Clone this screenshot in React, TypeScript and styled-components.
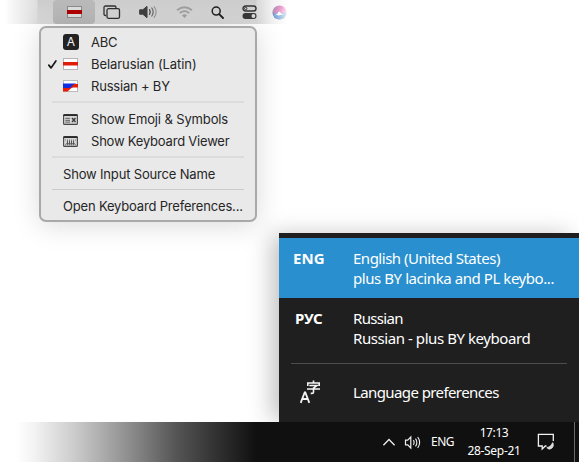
import React from 'react';
import styled, { createGlobalStyle } from 'styled-components';

const GlobalStyle = createGlobalStyle`
  html, body { margin: 0; padding: 0; background: #fff; overflow: hidden; }
  * { box-sizing: border-box; }
  svg { display: block; flex: none; }
`;

const Page = styled.main`
  display: flex;
  flex-direction: column;
  width: 579px;
  height: 462px;
  overflow: hidden;
  background: #fff;
`;

const MacArea = styled.section`
  flex: none;
  height: 233px;
  font-family: Inter, 'Liberation Sans', sans-serif;
`;

const MenuBar = styled.header`
  display: flex;
  align-items: center;
  width: 296px;
  height: 24px;
  padding-left: 53px;
  background:
    linear-gradient(90deg, #fff 4px, #f2f2f2 16px, #dedede 37px, transparent 38px, transparent 256px, #d9d9d9 257px, #f1f1f1 272px, #fff 288px),
    linear-gradient(#cccccc, #dadada);
`;

const BarItem = styled.span<{ $width: number; $active?: boolean }>`
  display: flex;
  flex: none;
  align-items: center;
  justify-content: center;
  width: ${p => p.$width}px;
  height: 24px;
  border-radius: 4px;
  background: ${p => (p.$active ? '#b9b9b9' : 'transparent')};
`;

const MacMenu = styled.nav`
  position: relative;
  z-index: 0;
  width: 218px;
  height: 196px;
  margin: 2px 0 0 39px;
  padding: 3px 0 0;
  border: 2px solid #a9a9a9;
  border-radius: 7px;
  background: #e9e9e9;
  box-shadow: 0 3px 28px rgba(0, 0, 0, 0.15);
`;

const MacRow = styled.div<{ $h?: number }>`
  display: flex;
  align-items: center;
  height: ${p => p.$h ?? 22}px;
  padding-left: 6px;
`;

const Mark = styled.span`
  display: flex;
  width: 16px;
`;

const Glyph = styled.span`
  display: flex;
  width: 28px;
`;

const MacText = styled.span<{ $ls: number }>`
  color: #262626;
  font-size: 13px;
  line-height: 16px;
  letter-spacing: ${p => p.$ls}px;
  white-space: nowrap;
`;

const Separator = styled.div<{ $thin?: boolean }>`
  height: 11px;
  margin: 0 11px;
  padding-top: ${p => (p.$thin ? 5 : 4)}px;
  &::after {
    content: '';
    display: block;
    height: ${p => (p.$thin ? 1 : 2)}px;
    background: ${p => (p.$thin ? '#cbcbcb' : '#dcdcdc')};
  }
`;

const Flyout = styled.section`
  position: relative;
  flex: none;
  width: 300px;
  height: 189px;
  margin-left: 279px;
  padding-top: 5px;
  background: #1f1f1f;
  font-family: 'Noto Sans', 'Open Sans', sans-serif;
  box-shadow: -9px 0 22px -2px rgba(0, 0, 0, 0.25);
`;

const LangRow = styled.div<{ $active?: boolean }>`
  display: grid;
  grid-template-columns: 60px 1fr;
  height: 60px;
  padding: 10px 0 0 14px;
  color: #fff;
  background: ${p => (p.$active ? '#298fce' : 'transparent')};
`;

const Code = styled.span<{ $ls: number; $indent?: number }>`
  padding-left: ${p => p.$indent ?? 0}px;
  font-size: 15px;
  font-weight: 700;
  line-height: 20px;
  letter-spacing: ${p => p.$ls}px;
`;

const Lines = styled.div`
  display: flex;
  flex-direction: column;
`;

const WinText = styled.span<{ $ls: number }>`
  color: #fff;
  font-size: 15px;
  line-height: 20px;
  letter-spacing: ${p => p.$ls}px;
  white-space: nowrap;
`;

const Rule = styled.hr`
  height: 1px;
  margin: 5px 12px 0;
  border: 0;
  background: #4c4c4c;
`;

const Preferences = styled.div`
  display: grid;
  grid-template-columns: 54px 1fr;
  align-items: center;
  height: 55px;
  padding-left: 20px;
`;

const Taskbar = styled.footer`
  position: relative;
  display: flex;
  align-items: center;
  flex: none;
  height: 40px;
  padding-left: 382px;
  color: #fff;
  font-family: 'Noto Sans', 'Open Sans', sans-serif;
  background: linear-gradient(90deg, #fff 16px, #f3f3f3 34px, #cbcbcb 75px, #8f8f8f 128px, #555 176px, #303030 218px, #101010 256px);
`;

const TrayCell = styled.span<{ $w: number }>`
  display: flex;
  flex: none;
  align-items: center;
  width: ${p => p.$w}px;
`;

const TrayText = styled.span<{ $ls: number }>`
  font-size: 12px;
  line-height: 18px;
  letter-spacing: ${p => p.$ls}px;
  white-space: nowrap;
`;

const Clock = styled.div`
  display: flex;
  flex-direction: column;
  align-items: center;
  width: 54px;
  margin-right: 16px;
`;

const DesktopEdge = styled.span`
  width: 1px;
  height: 40px;
  margin-left: 19px;
  background: #6a6a6a;
`;

const BelarusFlag = ({ dim }: { dim?: boolean }) => (
  <svg width="15" height="12" viewBox="0 0 15 12">
    <rect x=".5" y=".5" width="14" height="11" fill={dim ? '#dedede' : '#fff'} stroke={dim ? '#8b8b8b' : '#b5b5b5'} />
    <rect y="4" width="15" height={dim ? 4 : 3.5} fill={dim ? '#ad0000' : '#df1c07'} />
  </svg>
);

const MixedFlag = () => (
  <svg width="15" height="12" viewBox="0 0 15 12">
    <rect x=".5" y=".5" width="14" height="11" fill="#fff" stroke="#bababa" />
    <path d="M0 3.5H13L9 8H0Z" fill="#0d2de3" />
    <path d="M0 8H7L11 4H15V7.5H9L4.5 11.5H0Z" fill="#e81c05" />
  </svg>
);

const ScreensIcon = () => (
  <svg width="18" height="15" viewBox="0 0 18 15" fill="none" stroke="#303030" strokeWidth="1.3">
    <path d="M3 10.5H2.5Q1 10.5 1 9V2.5Q1 1 2.5 1H11.5Q13 1 13 2.5V3" />
    <rect x="4" y="3.7" width="12.5" height="9.6" rx="1.6" />
  </svg>
);

const MacSpeaker = () => (
  <svg width="19" height="14" viewBox="0 0 19 14" fill="none" strokeLinecap="round">
    <path d="M1 4.8H3.8L8 1.3V12.7L3.8 9.2H1Z" fill="#404040" stroke="#404040" strokeLinejoin="round" />
    <path d="M10.5 4.7Q12 7 10.5 9.3" stroke="#444" strokeWidth="1.2" />
    <path d="M12.8 3Q15.6 7 12.8 11" stroke="#666" strokeWidth="1.2" />
    <path d="M15.2 1.6Q19 7 15.2 12.4" stroke="#999" strokeWidth="1.2" />
  </svg>
);

const WifiIcon = () => (
  <svg width="17" height="13" viewBox="0 0 17 13" fill="none" stroke="#a0a0a0" strokeWidth="1.8">
    <path d="M1 4.3Q8.5-1.8 16 4.3M3.7 7.1Q8.5 3.1 13.3 7.1" />
    <path d="M6 9.4Q8.5 7.3 11 9.4L8.5 12Z" fill="#a0a0a0" stroke="none" />
  </svg>
);

const SearchIcon = () => (
  <svg width="13" height="13" viewBox="0 0 13 13" fill="none" stroke="#202020" strokeLinecap="round">
    <circle cx="5.2" cy="5.1" r="4" strokeWidth="1.5" />
    <path d="M8.2 8.2L12 12" strokeWidth="1.9" />
  </svg>
);

const ControlIcon = () => (
  <svg width="15" height="14" viewBox="0 0 15 14" fill="none" stroke="#333">
    <rect x="1" y="1" width="13" height="5" rx="2.5" strokeWidth="1.4" />
    <circle cx="3.7" cy="3.5" r="1.2" />
    <rect x=".5" y="8" width="14" height="6" rx="3" fill="#383838" stroke="none" />
    <circle cx="11.4" cy="11" r="1.9" fill="#ddd" stroke="none" />
  </svg>
);

const AssistantIcon = () => (
  <svg width="15" height="15" viewBox="0 0 15 15">
    <defs>
      <linearGradient id="orb" x1="0" y1="0" x2="1" y2=".4">
        <stop offset="0" stopColor="#9090ac" />
        <stop offset=".5" stopColor="#eb94c9" />
        <stop offset="1" stopColor="#fbe1ef" />
      </linearGradient>
      <linearGradient id="wave" x1="0" y1="0" x2="1" y2="0">
        <stop offset="0" stopColor="#6a94cf" />
        <stop offset="1" stopColor="#d4e7f7" />
      </linearGradient>
    </defs>
    <circle cx="7.5" cy="7.5" r="7" fill="url(#orb)" />
    <path d="M.6 7Q4 11 7 6Q10 10 14.4 7Q14.2 14.5 7.5 14.5Q.8 14.5 .6 7Z" fill="url(#wave)" />
    <path d="M2 10.5Q5 10 7 6.2Q9 9 13 10Q8 9.5 7 10.5Q5 9.5 2 10.5Z" fill="#fff" />
  </svg>
);

const CheckIcon = () => (
  <svg width="11" height="11" viewBox="0 0 11 11">
    <path d="M1.8 6.1L4 8.9L8.9 2" fill="none" stroke="#191919" strokeWidth="1.7" strokeLinecap="round" strokeLinejoin="round" />
  </svg>
);

const LatinBadge = styled.span`
  display: flex;
  align-items: center;
  justify-content: center;
  width: 16px;
  height: 16px;
  border-radius: 3px;
  background: #232323;
  color: #f4f4f4;
  font-size: 12px;
  line-height: 16px;
`;

const WindowIcon = ({ keys }: { keys?: boolean }) => (
  <svg width="15" height="11" viewBox="0 0 15 11" fill="none">
    <rect x=".6" y=".6" width="13.8" height="9.8" rx="1" fill="#d6d6d6" stroke="#454545" strokeWidth="1.1" />
    <path d="M.5 1.2H14.5" stroke="#292929" strokeWidth="1.6" />
    {keys ? (
      <>
        <path d="M2 4H13M2 8.8H13" stroke="#777" strokeDasharray="1 1" />
        <path d="M4.5 4.5V8.5M6.5 4.5V8.5M8.5 4.5V8.5M10.5 4.5V8.5M3 7.8H12" stroke="#555" />
      </>
    ) : (
      <>
        <path d="M2.3 4.3H7M2.3 6.3H7M2.3 8.2H7" stroke="#777" strokeWidth="1.2" />
        <path d="M9 4L12.5 8M12.5 4L9 8" stroke="#3b3b3b" strokeWidth="1.4" />
      </>
    )}
  </svg>
);

const LanguageIcon = () => (
  <svg width="24" height="25" viewBox="0 0 24 25" fill="none" stroke="#f4f4f4" strokeWidth="1.8">
    <path d="M1.7 23.8L5.7 13.5H6.3L10.3 23.8M3 20H9" />
    <path d="M14.5 1.5V4M8.8 7V4H20.2V7M10.3 6.5H18L14.5 9.2V13.2Q14.5 14.4 13 14.4H11.7M8 10H21" strokeWidth="1.6" />
  </svg>
);

const Chevron = () => (
  <svg width="14" height="9" viewBox="0 0 14 9">
    <path d="M1.4 7.2L7 1.5L12.6 7.2" fill="none" stroke="#eee" strokeWidth="1.3" />
  </svg>
);

const WinSpeaker = () => (
  <svg width="18" height="15" viewBox="0 0 18 15" fill="none" stroke="#eee">
    <path d="M1.5 5.2H3.7L6.8 2V13L3.7 9.8H1.5Z" strokeWidth="1.2" />
    <path d="M9.3 5.2Q11 7.5 9.3 9.8M11.5 3.6Q14.2 7.5 11.5 11.4M13.7 2Q17.6 7.5 13.7 13" strokeWidth="1.1" />
  </svg>
);

const ActionIcon = () => (
  <svg width="18" height="18" viewBox="0 0 18 18" fill="none" stroke="#f2f2f2" strokeWidth="1.3">
    <path d="M16.3 8V1.4H1.4V13H5.2V16L8.3 13H9.5" />
    <path d="M15.8 9.6Q17.4 13.8 14.2 15.6Q11.8 17 9.8 14.7Q13.3 14.8 15.8 9.6Z" fill="#ddd" strokeWidth=".7" />
  </svg>
);

const SourceRow = ({ icon, text, ls, checked }: { icon: React.ReactNode; text: string; ls: number; checked?: boolean }) => (
  <MacRow>
    <Mark>{checked && <CheckIcon />}</Mark>
    <Glyph>{icon}</Glyph>
    <MacText $ls={ls}>{text}</MacText>
  </MacRow>
);

export default function App() {
  return (
    <Page>
      <GlobalStyle />
      <MacArea>
        <MenuBar>
          <BarItem $width={42} $active><BelarusFlag dim /></BarItem>
          <BarItem $width={33}><ScreensIcon /></BarItem>
          <BarItem $width={40}><MacSpeaker /></BarItem>
          <BarItem $width={32}><WifiIcon /></BarItem>
          <BarItem $width={34}><SearchIcon /></BarItem>
          <BarItem $width={30}><ControlIcon /></BarItem>
          <BarItem $width={31}><AssistantIcon /></BarItem>
        </MenuBar>
        <MacMenu>
          <SourceRow icon={<LatinBadge>A</LatinBadge>} text="ABC" ls={-0.2} />
          <SourceRow icon={<BelarusFlag />} text="Belarusian (Latin)" ls={-0.08} checked />
          <SourceRow icon={<MixedFlag />} text="Russian + BY" ls={-0.2} />
          <Separator />
          <SourceRow icon={<WindowIcon />} text="Show Emoji & Symbols" ls={-0.13} />
          <SourceRow icon={<WindowIcon keys />} text="Show Keyboard Viewer" ls={-0.21} />
          <Separator />
          <MacRow $h={21}><Mark /><MacText $ls={-0.17}>Show Input Source Name</MacText></MacRow>
          <Separator $thin />
          <MacRow><Mark /><MacText $ls={-0.18}>Open Keyboard Preferences...</MacText></MacRow>
        </MacMenu>
      </MacArea>
      <Flyout>
        <LangRow $active>
          <Code $ls={0.1}>ENG</Code>
          <Lines>
            <WinText $ls={-0.49}>English (United States)</WinText>
            <WinText $ls={-0.43}>plus BY lacinka and PL keybo...</WinText>
          </Lines>
        </LangRow>
        <LangRow>
          <Code $ls={0} $indent={2}>РУС</Code>
          <Lines>
            <WinText $ls={-0.65}>Russian</WinText>
            <WinText $ls={-0.43}>Russian - plus BY keyboard</WinText>
          </Lines>
        </LangRow>
        <Rule />
        <Preferences>
          <LanguageIcon />
          <WinText $ls={-0.6}>Language preferences</WinText>
        </Preferences>
      </Flyout>
      <Taskbar>
        <TrayCell $w={22}><Chevron /></TrayCell>
        <TrayCell $w={27}><WinSpeaker /></TrayCell>
        <TrayCell $w={36}><TrayText $ls={-0.5}>ENG</TrayText></TrayCell>
        <Clock>
          <TrayText $ls={-0.4}>17:13</TrayText>
          <TrayText $ls={-0.3}>28-Sep-21</TrayText>
        </Clock>
        <ActionIcon />
        <DesktopEdge />
      </Taskbar>
    </Page>
  );
}
